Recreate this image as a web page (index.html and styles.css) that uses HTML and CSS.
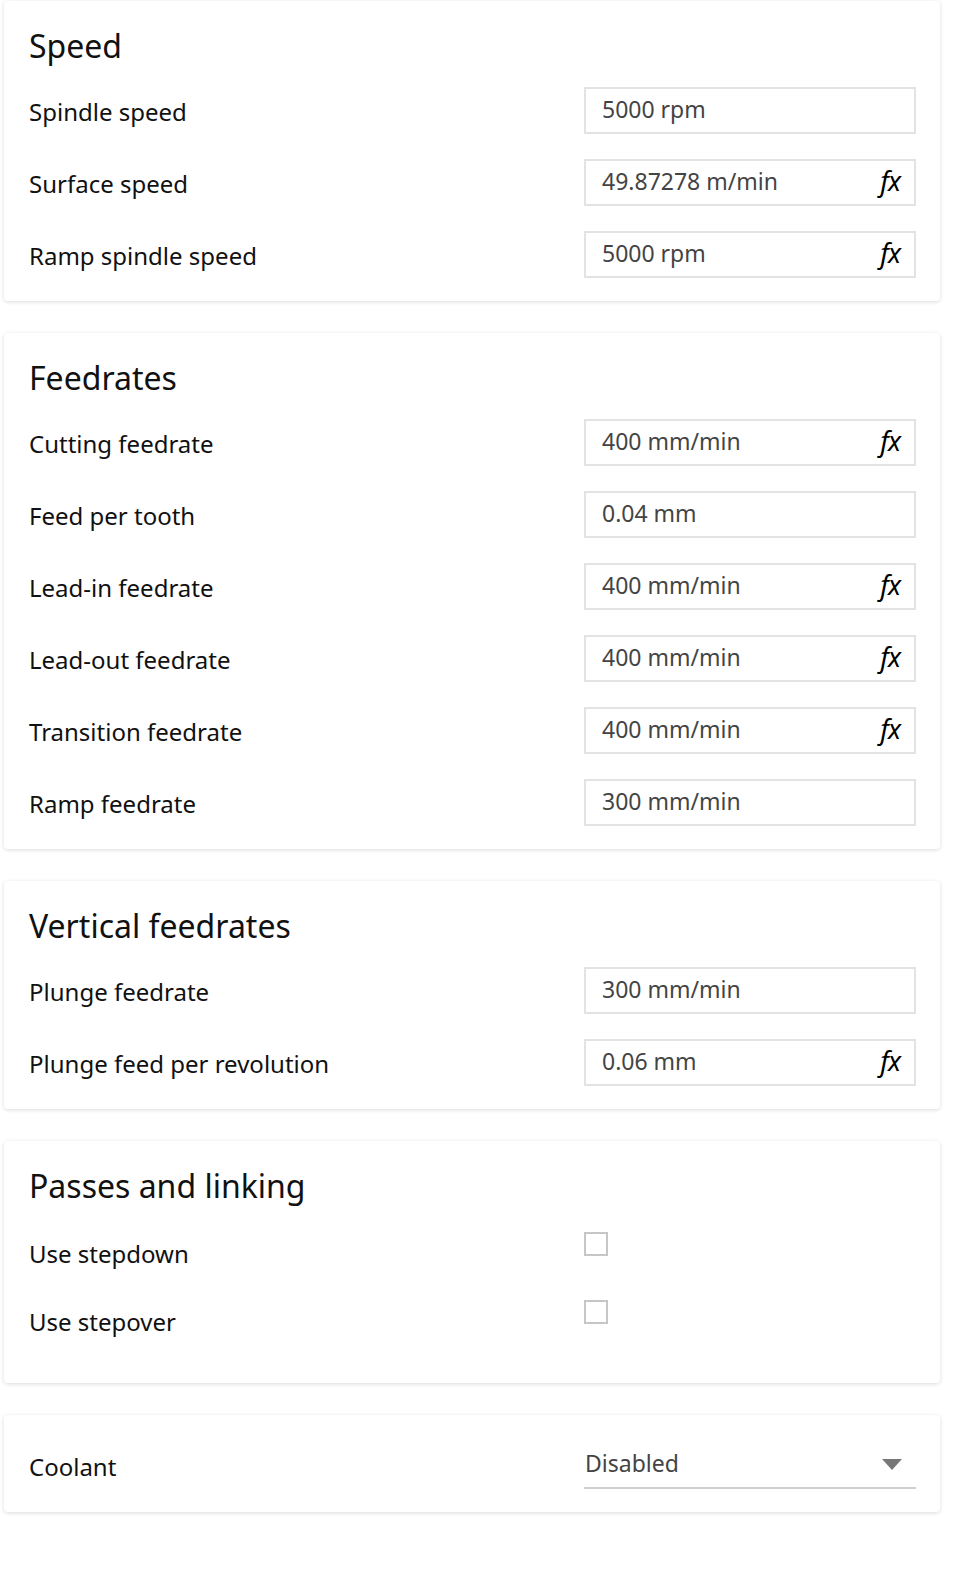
FILE: index.html
```html
<!DOCTYPE html>
<html lang="en">
<head>
    <meta charset="UTF-8">
    <meta name="viewport" content="width=device-width, initial-scale=1.0">
    <title>Feeds and Speeds</title>
    <link rel="stylesheet" href="styles.css">
</head>
<body>
    <div class="panel">

        <!-- Speed -->
        <section class="card">
            <h2>Speed</h2>
            <div class="rows">
                <div class="row">
                    <label>Spindle speed</label>
                    <div class="field"><input type="text" value="5000 rpm"></div>
                </div>
                <div class="row">
                    <label>Surface speed</label>
                    <div class="field"><input type="text" value="49.87278 m/min"><span class="fx">fx</span></div>
                </div>
                <div class="row">
                    <label>Ramp spindle speed</label>
                    <div class="field"><input type="text" value="5000 rpm"><span class="fx">fx</span></div>
                </div>
            </div>
        </section>

        <!-- Feedrates -->
        <section class="card">
            <h2>Feedrates</h2>
            <div class="rows">
                <div class="row">
                    <label>Cutting feedrate</label>
                    <div class="field"><input type="text" value="400 mm/min"><span class="fx">fx</span></div>
                </div>
                <div class="row">
                    <label>Feed per tooth</label>
                    <div class="field"><input type="text" value="0.04 mm"></div>
                </div>
                <div class="row">
                    <label>Lead-in feedrate</label>
                    <div class="field"><input type="text" value="400 mm/min"><span class="fx">fx</span></div>
                </div>
                <div class="row">
                    <label>Lead-out feedrate</label>
                    <div class="field"><input type="text" value="400 mm/min"><span class="fx">fx</span></div>
                </div>
                <div class="row">
                    <label>Transition feedrate</label>
                    <div class="field"><input type="text" value="400 mm/min"><span class="fx">fx</span></div>
                </div>
                <div class="row">
                    <label>Ramp feedrate</label>
                    <div class="field"><input type="text" value="300 mm/min"></div>
                </div>
            </div>
        </section>

        <!-- Vertical feedrates -->
        <section class="card">
            <h2>Vertical feedrates</h2>
            <div class="rows">
                <div class="row">
                    <label>Plunge feedrate</label>
                    <div class="field"><input type="text" value="300 mm/min"></div>
                </div>
                <div class="row">
                    <label>Plunge feed per revolution</label>
                    <div class="field"><input type="text" value="0.06 mm"><span class="fx">fx</span></div>
                </div>
            </div>
        </section>

        <!-- Passes and linking -->
        <section class="card card-checks">
            <h2>Passes and linking</h2>
            <div class="rows checks">
                <div class="row">
                    <label>Use stepdown</label>
                    <div><input type="checkbox"></div>
                </div>
                <div class="row">
                    <label>Use stepover</label>
                    <div><input type="checkbox"></div>
                </div>
            </div>
        </section>

        <!-- Coolant -->
        <section class="card">
            <div class="row">
                <label>Coolant</label>
                <div class="select">
                    <span>Disabled</span>
                    <svg width="20" height="11" viewBox="0 0 20 11"><polygon points="0,0 20,0 10,11" fill="#777"/></svg>
                </div>
            </div>
        </section>

    </div>
</body>
</html>
```

FILE: styles.css
```css
/* General Styles */
body {
    font-family: "Noto Sans", Arial, sans-serif;
    background-color: #fff;
    color: #111;
    margin: 0;
    padding: 0;
}

.panel {
    display: flex;
    flex-direction: column;
    gap: 32px;
    padding: 1px 18px 40px 4px;
}

.card {
    background-color: #fff;
    border-radius: 4px;
    box-shadow: 0 1px 4px rgba(0, 0, 0, 0.14);
    padding: 25px 24px 25px 25px;
}

h2 {
    font-size: 32px;
    font-weight: normal;
    line-height: 40px;
    margin: 0 0 19px 0;
}

.rows {
    display: flex;
    flex-direction: column;
    gap: 25px;
}

.row {
    display: grid;
    grid-template-columns: 555px minmax(0, 1fr);
    align-items: center;
    height: 47px;
}

label {
    font-size: 24px;
    line-height: 47px;
    padding-top: 3px;
}

/* Text fields */
.field {
    display: flex;
    align-items: center;
    height: 47px;
    box-sizing: border-box;
    border: 2px solid #e3e3e3;
}

.field input {
    flex: 1;
    width: 0;
    min-width: 0;
    border: none;
    outline: none;
    padding: 0 0 0 16px;
    font-family: "Noto Sans", Arial, sans-serif;
    font-size: 23px;
    color: #444;
    background: transparent;
    margin-top: -3px;
}

.fx {
    font-style: italic;
    font-size: 27px;
    color: #000;
    padding-right: 14px;
    margin-top: -4px;
    letter-spacing: -1px;
}

/* Checkboxes */
.card-checks h2 {
    margin-bottom: 21px;
}

.card-checks {
    padding-bottom: 41px;
}

.checks {
    gap: 21px;
}

.checks .row {
    align-items: start;
}

input[type="checkbox"] {
    appearance: none;
    width: 24px;
    height: 24px;
    box-sizing: border-box;
    border: 2px solid #c6c6c6;
    margin: 5px 0 0 0;
    background: #fff;
}

/* Dropdown */
.select {
    display: flex;
    justify-content: space-between;
    align-items: center;
    height: 47px;
    box-sizing: border-box;
    border-bottom: 2px solid #d0d0d0;
    padding: 0 14px 0 1px;
    font-size: 23px;
    color: #444;
}

.select span {
    margin-top: -2px;
}
```
